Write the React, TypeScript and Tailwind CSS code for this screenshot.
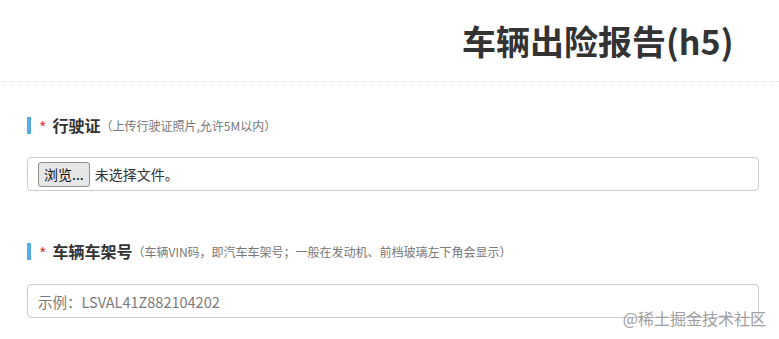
import React from "react";

const FONT = "font-['Noto_Sans_CJK_SC','Noto_Sans',sans-serif]";

function SectionTitle({ title, hint }: { title: string; hint: string }) {
  return (
    <div className="flex h-[24px] items-center">
      <span className="h-[17px] w-[4px] bg-[#53ade2]" />
      <span className="ml-[8px] mt-[4px] text-[16px] leading-none text-[#e4393c]">*</span>
      <span className="ml-[6px] text-[16px] font-bold leading-[24px] text-[#333]">{title}</span>
      <span className="mt-[2px] text-[12px] leading-[24px] text-[#777]">{hint}</span>
    </div>
  );
}

export default function App() {
  return (
    <div className={`relative h-[339px] w-[779px] overflow-hidden bg-white ${FONT}`}>
      {/* 标题 */}
      <div className="h-[82px] border-b border-dotted border-[#e0e0e0] pt-[17px]">
        <h1 className="pl-[462px] text-[34px] font-bold leading-[48px] text-[#333]">
          车辆出险报告(h5)
        </h1>
      </div>

      <div className="pl-[27px] pr-[20px]">
        {/* 行驶证 */}
        <div className="mt-[31px]">
          <SectionTitle title="行驶证" hint="（上传行驶证照片,允许5M以内）" />
          <div className="mt-[20px] flex h-[34px] items-center rounded-[4px] border border-[#ccc] px-[10px]">
            <span className="flex h-[25px] items-center rounded-[3px] border border-[#8f8f8f] bg-[#e6e6e6] px-[5px] text-[14px] text-[#111]">
              浏览...
            </span>
            <span className="ml-[5px] text-[14px] text-[#333]">未选择文件。</span>
          </div>
        </div>

        {/* 车辆车架号 */}
        <div className="mt-[48px]">
          <SectionTitle
            title="车辆车架号"
            hint="（车辆VIN码，即汽车车架号；一般在发动机、前档玻璃左下角会显示）"
          />
          <input
            className="mt-[21px] block h-[34px] w-full rounded-[4px] border border-[#ccc] px-[10px] text-[14.5px] text-[#555] outline-none placeholder:text-[#7a7a7a]"
            placeholder="示例：LSVAL41Z882104202"
          />
        </div>
      </div>

      {/* 水印 */}
      <div className="absolute bottom-[10px] right-[13px] text-[16px] leading-[22px] text-[#a0a0a0]">
        @稀土掘金技术社区
      </div>
    </div>
  );
}
